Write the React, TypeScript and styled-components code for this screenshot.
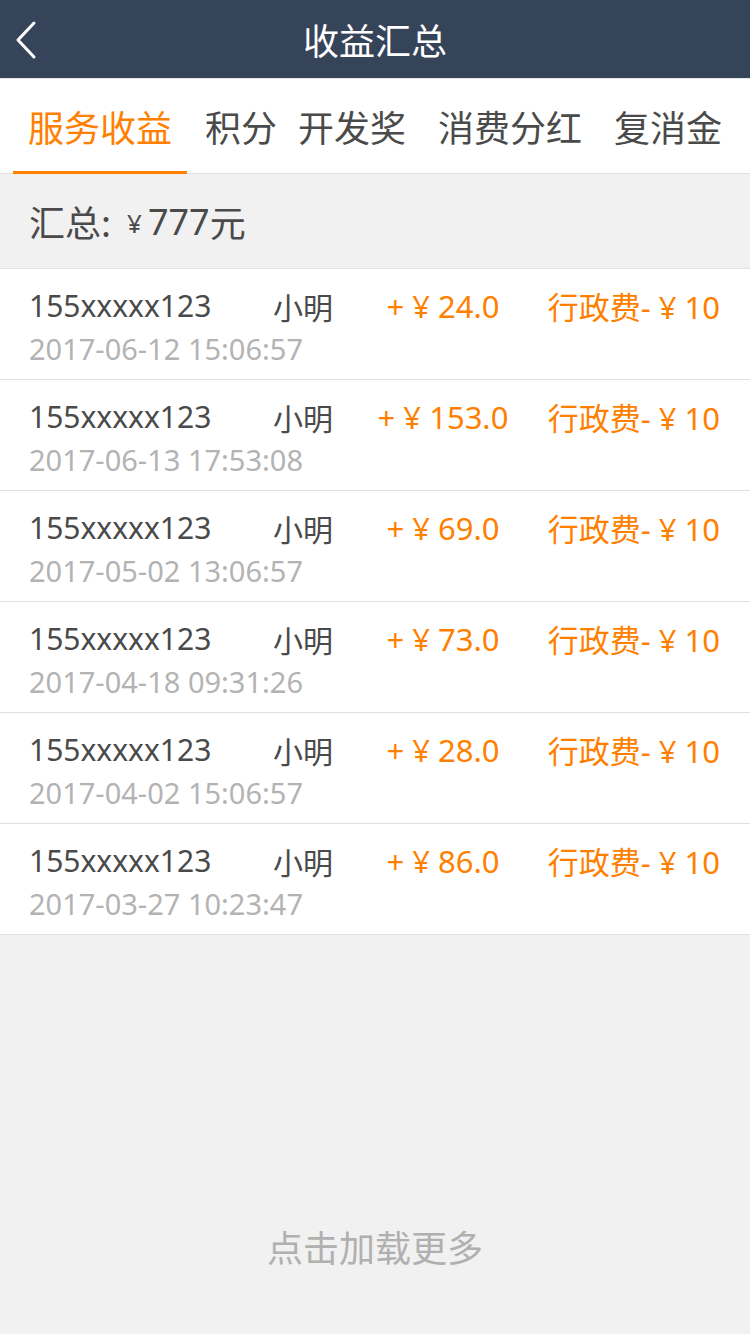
import React from "react";
import styled, { createGlobalStyle } from "styled-components";

const Global = createGlobalStyle`
  html, body { margin: 0; padding: 0; background: #f1f1f1; }
  body { font-family: "Noto Sans", "Noto Sans CJK SC", sans-serif; }
  * { box-sizing: border-box; }
`;

const Page = styled.div`
  width: 750px;
  min-height: 1334px;
  background: #f1f1f1;
  display: flex;
  flex-direction: column;
`;

const Header = styled.header`
  height: 79px;
  background: #36445a;
  position: relative;
  display: flex;
  align-items: center;
  justify-content: center;
  border-bottom: 1px solid #e6e6e6;
`;

const Title = styled.h1`
  margin: 0;
  color: #fff;
  font-size: 36px;
  font-weight: 400;
  font-family: "Noto Sans CJK SC", sans-serif;
  line-height: 1;
`;

const Back = styled.div`
  position: absolute;
  left: 14px;
  top: 20px;
  width: 24px;
  height: 40px;
`;

const Tabs = styled.nav`
  height: 95px;
  background: #fff;
  display: flex;
  align-items: stretch;
  padding-left: 13px;
  border-bottom: 1px solid #e2e2e2;
`;

const Tab = styled.div<{ $active?: boolean; $w: number; $pad: number }>`
  flex: 0 0 ${(p) => p.$w}px;
  padding-left: ${(p) => p.$pad}px;
  display: flex;
  align-items: center;
  font-family: "Noto Sans CJK SC", sans-serif;
  font-size: 36px;
  color: ${(p) => (p.$active ? "#ff7f00" : "#4a4a4a")};
  border-bottom: 3px solid ${(p) => (p.$active ? "#ff7f00" : "transparent")};
  margin-bottom: -1px;
  white-space: nowrap;
  padding-top: 1px;
`;

const Summary = styled.div`
  height: 95px;
  display: flex;
  align-items: center;
  padding-left: 29px;
  color: #4a4a4a;
  font-size: 36px;
  border-bottom: 1px solid #e2e2e2;
`;

const Cjk = styled.span`
  font-family: "Noto Sans CJK SC", sans-serif;
`;

const Yen = styled.span`
  font-size: 26px;
  margin: 4px 6px 0 16px;
`;

const List = styled.div`
  background: #fff;
`;

const Row = styled.div`
  height: 111px;
  border-bottom: 1px solid #e0e0e0;
  padding: 14px 30px 0 29px;
  display: flex;
  flex-direction: column;
`;

const Line = styled.div`
  display: grid;
  grid-template-columns: 244px 80px 180px 1fr;
  align-items: center;
  height: 44px;
`;

const Phone = styled.span`
  font-size: 30px;
  color: #4a4a4a;
`;

const Name = styled.span`
  font-family: "Noto Sans CJK SC", sans-serif;
  font-size: 30px;
  color: #4a4a4a;
`;

const Amount = styled.span`
  font-size: 31px;
  color: #ff7f00;
  text-align: center;
  white-space: nowrap;
`;

const Fee = styled.span`
  font-size: 31px;
  color: #ff7f00;
  text-align: right;
  white-space: nowrap;
`;

const Date = styled.div`
  font-size: 29px;
  color: #b3b3b3;
  margin-top: 2px;
`;

const LoadMore = styled.div`
  flex: 1;
  display: flex;
  align-items: flex-end;
  justify-content: center;
  padding-bottom: 62px;
  font-family: "Noto Sans CJK SC", sans-serif;
  font-size: 36px;
  color: #b0b0b0;
  min-height: 398px;
`;

const rows = [
  { amt: "24.0", date: "2017-06-12 15:06:57" },
  { amt: "153.0", date: "2017-06-13 17:53:08" },
  { amt: "69.0", date: "2017-05-02 13:06:57" },
  { amt: "73.0", date: "2017-04-18 09:31:26" },
  { amt: "28.0", date: "2017-04-02 15:06:57" },
  { amt: "86.0", date: "2017-03-27 10:23:47" },
];

const tabs = [
  { t: "服务收益", w: 174, pad: 15, active: true },
  { t: "积分", w: 111, pad: 18 },
  { t: "开发奖", w: 122, pad: 0 },
  { t: "消费分红", w: 180, pad: 18 },
  { t: "复消金", w: 150, pad: 14 },
];

export default function App() {
  return (
    <Page>
      <Global />
      <Header>
        <Back>
          <svg width="24" height="40" viewBox="0 0 24 40">
            <polyline points="20,3 4,20 20,37" fill="none" stroke="#fff" strokeWidth="3" strokeLinecap="round" strokeLinejoin="round" />
          </svg>
        </Back>
        <Title>收益汇总</Title>
      </Header>
      <Tabs>
        {tabs.map((x) => (
          <Tab key={x.t} $active={x.active} $w={x.w} $pad={x.pad}>
            {x.t}
          </Tab>
        ))}
      </Tabs>
      <Summary>
        <Cjk>汇总:</Cjk>
        <Yen>¥</Yen>
        777
        <Cjk>元</Cjk>
      </Summary>
      <List>
        {rows.map((r, i) => (
          <Row key={i}>
            <Line>
              <Phone>155xxxxx123</Phone>
              <Name>小明</Name>
              <Amount>+ ¥ {r.amt}</Amount>
              <Fee>行政费- ¥ 10</Fee>
            </Line>
            <Date>{r.date}</Date>
          </Row>
        ))}
      </List>
      <LoadMore>点击加载更多</LoadMore>
    </Page>
  );
}
